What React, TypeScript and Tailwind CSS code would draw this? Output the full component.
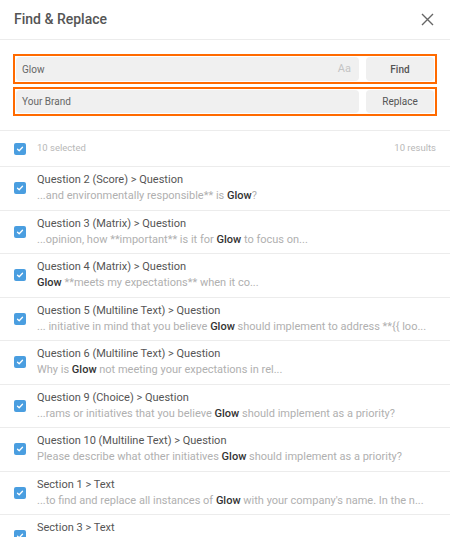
import { Fragment } from "react";

const ROWS: { title: string; pre: string; post: string }[] = [
  { title: "Question 2 (Score) > Question", pre: "...and environmentally responsible** is ", post: "?" },
  { title: "Question 3 (Matrix) > Question", pre: "...opinion, how **important** is it for ", post: " to focus on..." },
  { title: "Question 4 (Matrix) > Question", pre: "", post: " **meets my expectations** when it co..." },
  { title: "Question 5 (Multiline Text) > Question", pre: "... initiative in mind that you believe ", post: " should implement to address **{{ loo..." },
  { title: "Question 6 (Multiline Text) > Question", pre: "Why is ", post: " not meeting your expectations in rel..." },
  { title: "Question 9 (Choice) > Question", pre: "...rams or initiatives that you believe ", post: " should implement as a priority?" },
  { title: "Question 10 (Multiline Text) > Question", pre: "Please describe what other initiatives ", post: " should implement as a priority?" },
  { title: "Section 1 > Text", pre: "...to find and replace all instances of ", post: " with your company's name. In the n..." },
  { title: "Section 3 > Text", pre: "...we'd love to hear your thoughts on ", post: "..." },
];

function Check() {
  return (
    <span className="flex h-[12px] w-[12px] shrink-0 items-center justify-center rounded-[2px] bg-[#4a9ee0]">
      <svg width="8" height="8" viewBox="0 0 8 8" fill="none">
        <path d="M1.5 4.2 L3.2 5.8 L6.5 2.3" stroke="white" strokeWidth="1.3" strokeLinecap="round" strokeLinejoin="round" />
      </svg>
    </span>
  );
}

export default function App() {
  return (
    <div className="h-[537px] w-[450px] overflow-hidden bg-white font-['Roboto',sans-serif]">
      <div className="flex h-[40px] items-center justify-between border-b border-[#ececec] pl-[14px] pr-[16px]">
        <h1 className="text-[14px] font-medium text-[#555]">Find &amp; Replace</h1>
        <svg width="13" height="13" viewBox="0 0 13 13" fill="none">
          <path d="M1 1 L12 12 M12 1 L1 12" stroke="#666" strokeWidth="1.4" />
        </svg>
      </div>

      <div className="flex flex-col gap-[3px] border-b border-[#ececec] px-[13px] pb-[14px] pt-[14px]">
        <div className="flex h-[30px] gap-[7px] border-2 border-[#ff6a00] p-px">
          <div className="flex flex-1 items-center justify-between rounded-sm bg-[#f0f0f0] pl-[6px] pr-[8px] text-[10px] text-[#666]">
            <span>Glow</span>
            <span className="text-[11px] text-[#c4c4c4]">Aa</span>
          </div>
          <button className="w-[68px] rounded-sm bg-[#f0f0f0] text-[10px] font-medium text-[#555]">Find</button>
        </div>
        <div className="flex h-[29px] gap-[7px] border-2 border-[#ff6a00] p-px">
          <div className="flex flex-1 items-center rounded-sm bg-[#f0f0f0] pl-[6px] text-[10px] text-[#666]">
            <span>Your Brand</span>
          </div>
          <button className="w-[68px] rounded-sm bg-[#f0f0f0] text-[10px] text-[#555]">Replace</button>
        </div>
      </div>

      <div className="flex h-[36px] items-center border-b border-[#ececec] pl-[14px] pr-[14px] text-[9.5px] text-[#b8b8b8]">
        <Check />
        <span className="ml-[11px] flex-1">10 selected</span>
        <span>10 results</span>
      </div>

      {ROWS.map((r) => (
        <div key={r.title} className="flex h-[43.5px] items-center border-b border-[#ececec] pl-[14px]">
          <Check />
          <div className="ml-[11px] flex h-full flex-col pt-[5px]">
            <div className="text-[11px] leading-[16px] text-[#555]">{r.title}</div>
            <div className="whitespace-nowrap text-[11px] leading-[16px] text-[#b0b0b0]">
              <Fragment>
                {r.pre}
                <b className="font-medium text-[#333]">Glow</b>
                {r.post}
              </Fragment>
            </div>
          </div>
        </div>
      ))}
    </div>
  );
}
